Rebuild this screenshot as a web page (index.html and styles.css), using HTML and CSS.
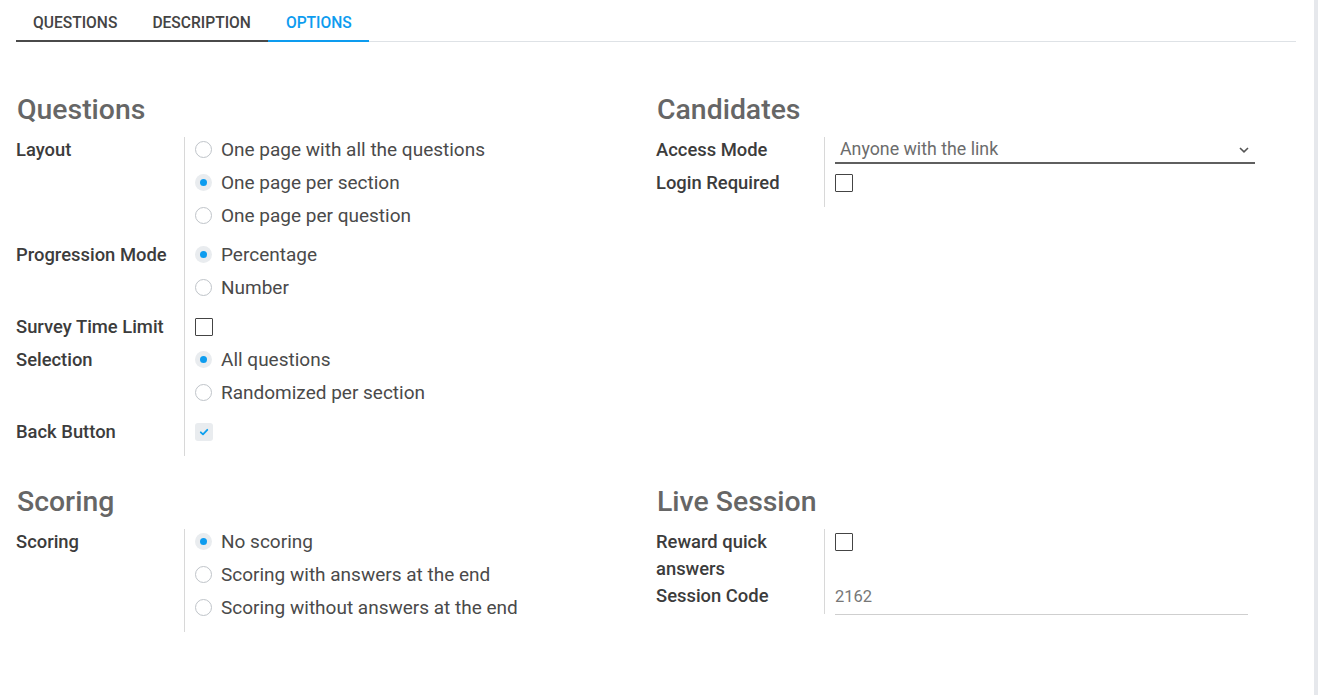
FILE: index.html
```html
<!DOCTYPE html>
<html>
<head>
<meta charset="utf-8">
<link rel="stylesheet" href="styles.css">
</head>
<body>
<div class="page">
  <div class="sheet">
    <nav class="tabs">
      <div class="tab">QUESTIONS</div>
      <div class="tab">DESCRIPTION</div>
      <div class="tab active">OPTIONS</div>
    </nav>
    <div class="content">
      <section class="col">
        <h2 class="heading">Questions</h2>
        <div class="group">
          <div class="labels-col">
            <div class="label lbl-radio3">Layout</div>
            <div class="label lbl-radio2">Progression Mode</div>
            <div class="label lbl-single">Survey Time Limit</div>
            <div class="label lbl-radio2">Selection</div>
            <div class="label lbl-single">Back Button</div>
          </div>
          <div class="fields-col">
            <div class="radios">
              <div class="radio"><span class="rb"></span>One page with all the questions</div>
              <div class="radio"><span class="rb on"></span>One page per section</div>
              <div class="radio"><span class="rb"></span>One page per question</div>
            </div>
            <div class="radios">
              <div class="radio"><span class="rb on"></span>Percentage</div>
              <div class="radio"><span class="rb"></span>Number</div>
            </div>
            <div class="single"><span class="cb"></span></div>
            <div class="radios">
              <div class="radio"><span class="rb on"></span>All questions</div>
              <div class="radio"><span class="rb"></span>Randomized per section</div>
            </div>
            <div class="single"><span class="cb checked"><svg viewBox="0 0 10 10" width="10" height="10"><path d="M1.8 5.3 L4 7.4 L8.3 2.8" fill="none" stroke="#0ea0ef" stroke-width="1.8" stroke-linecap="round" stroke-linejoin="round"/></svg></span></div>
          </div>
        </div>
      </section>

      <section class="col">
        <h2 class="heading">Candidates</h2>
        <div class="group">
          <div class="labels-col">
            <div class="label lbl-single">Access Mode</div>
            <div class="label lbl-single">Login Required</div>
          </div>
          <div class="fields-col">
            <div class="single top">
              <div class="select">
                <span>Anyone with the link</span>
                <svg class="chev" viewBox="0 0 10 6" width="10" height="6"><path d="M1 1 L5 4.8 L9 1" fill="none" stroke="#555" stroke-width="1.6"/></svg>
              </div>
            </div>
            <div class="single"><span class="cb"></span></div>
          </div>
        </div>
      </section>

      <section class="col row2">
        <h2 class="heading">Scoring</h2>
        <div class="group">
          <div class="labels-col">
            <div class="label lbl-radio3">Scoring</div>
          </div>
          <div class="fields-col">
            <div class="radios last">
              <div class="radio"><span class="rb on"></span>No scoring</div>
              <div class="radio"><span class="rb"></span>Scoring with answers at the end</div>
              <div class="radio"><span class="rb"></span>Scoring without answers at the end</div>
            </div>
          </div>
        </div>
      </section>

      <section class="col row2">
        <h2 class="heading">Live Session</h2>
        <div class="group">
          <div class="labels-col">
            <div class="label wrap">Reward quick answers</div>
            <div class="label lbl-single">Session Code</div>
          </div>
          <div class="fields-col">
            <div class="wrapfield"><span class="cb"></span></div>
            <div class="single top"><div class="input">2162</div></div>
          </div>
        </div>
      </section>
    </div>
  </div>
  <div class="edge"></div>
</div>
</body>
</html>
```

FILE: styles.css
```css
* { box-sizing: border-box; }
html, body { margin: 0; padding: 0; background: #fff; }
body {
  font-family: Roboto, "Noto Sans", sans-serif;
  color: #4c4c4c;
  width: 1318px;
  height: 695px;
  overflow: hidden;
}
.page {
  display: flex;
  height: 695px;
}
.sheet {
  flex: 0 0 1314px;
  padding: 0 18px 0 16px;
}
.edge {
  flex: 0 0 4px;
  background: #e6e8ec;
}
.tabs {
  display: flex;
  border-bottom: 1px solid #dee2e6;
  height: 42px;
}
.tab {
  font-size: 15.6px;
  font-weight: 500;
  color: #444;
  padding: 14px 17px 0;
  height: 42px;
  border-bottom: 2px solid #4a4a4a;
  margin-bottom: -1px;
}
.tab + .tab { padding-left: 18px; }
.tab.active {
  color: #0d9cef;
  border-bottom-color: #0d9cef;
}
.content {
  display: grid;
  grid-template-columns: 640px 640px;
  padding-top: 49px;
}
.col {
  display: flex;
  flex-direction: column;
}
.col.row2 { margin-top: 27px; }
.heading {
  margin: 0 0 0 1px;
  font-size: 28.4px;
  font-weight: 500;
  color: #666;
  line-height: 38px;
  height: 38px;
}
.group {
  display: flex;
  margin-top: 8px;
}
.labels-col {
  flex: 0 0 169px;
  padding-right: 10px;
  padding-bottom: 8px;
  border-right: 1px solid #d8d8d8;
}
.row2 .labels-col { padding-bottom: 2px; }
.fields-col {
  flex: 1;
  padding-left: 10px;
}
.labels-col > :first-child,
.fields-col > :first-child { margin-top: -4px; }
.label {
  font-size: 18.4px;
  font-weight: 500;
  color: #3c3c3c;
  line-height: 27px;
  padding-top: 3px;
}
.lbl-radio3 { height: 105px; }
.lbl-radio2 { height: 72px; }
.lbl-single { height: 33px; }
.wrap { height: 54px; }
.radios { margin-bottom: 6px; }
.radios.last { margin-bottom: 0; }
.radio {
  display: flex;
  align-items: center;
  height: 33px;
  font-size: 19px;
  color: #4a4a4a;
}
.rb {
  width: 17px;
  height: 17px;
  border-radius: 50%;
  border: 1px solid #bfc4c9;
  margin-right: 9px;
  display: flex;
  align-items: center;
  justify-content: center;
  flex: none;
}
.rb.on {
  border: none;
  background: #e9ecef;
}
.rb.on::after {
  content: "";
  width: 7px;
  height: 7px;
  border-radius: 50%;
  background: #0d9cef;
}
.single {
  height: 33px;
  display: flex;
  align-items: center;
}
.single.top { align-items: flex-start; }
.wrapfield {
  height: 54px;
  padding-top: 8px;
}
.cb {
  width: 18px;
  height: 18px;
  border: 1px solid #444;
  border-radius: 1px;
  display: flex;
  align-items: center;
  justify-content: center;
}
.cb.checked {
  border: none;
  background: #e9ecef;
  border-radius: 3px;
}
.select {
  width: 420px;
  height: 31px;
  padding: 2px 4px 0 5px;
  line-height: 27px;
  display: flex;
  justify-content: space-between;
  align-items: center;
  border-bottom: 2px solid #5f5f5f;
  font-size: 17.8px;
  color: #6c6c6c;
}
.chev { margin-right: 2px; margin-top: 2px; }
.input {
  width: 413px;
  height: 36px;
  padding-top: 4px;
  line-height: 27px;
  font-size: 16.5px;
  color: #777;
  border-bottom: 1px solid #cfcfcf;
}
```
